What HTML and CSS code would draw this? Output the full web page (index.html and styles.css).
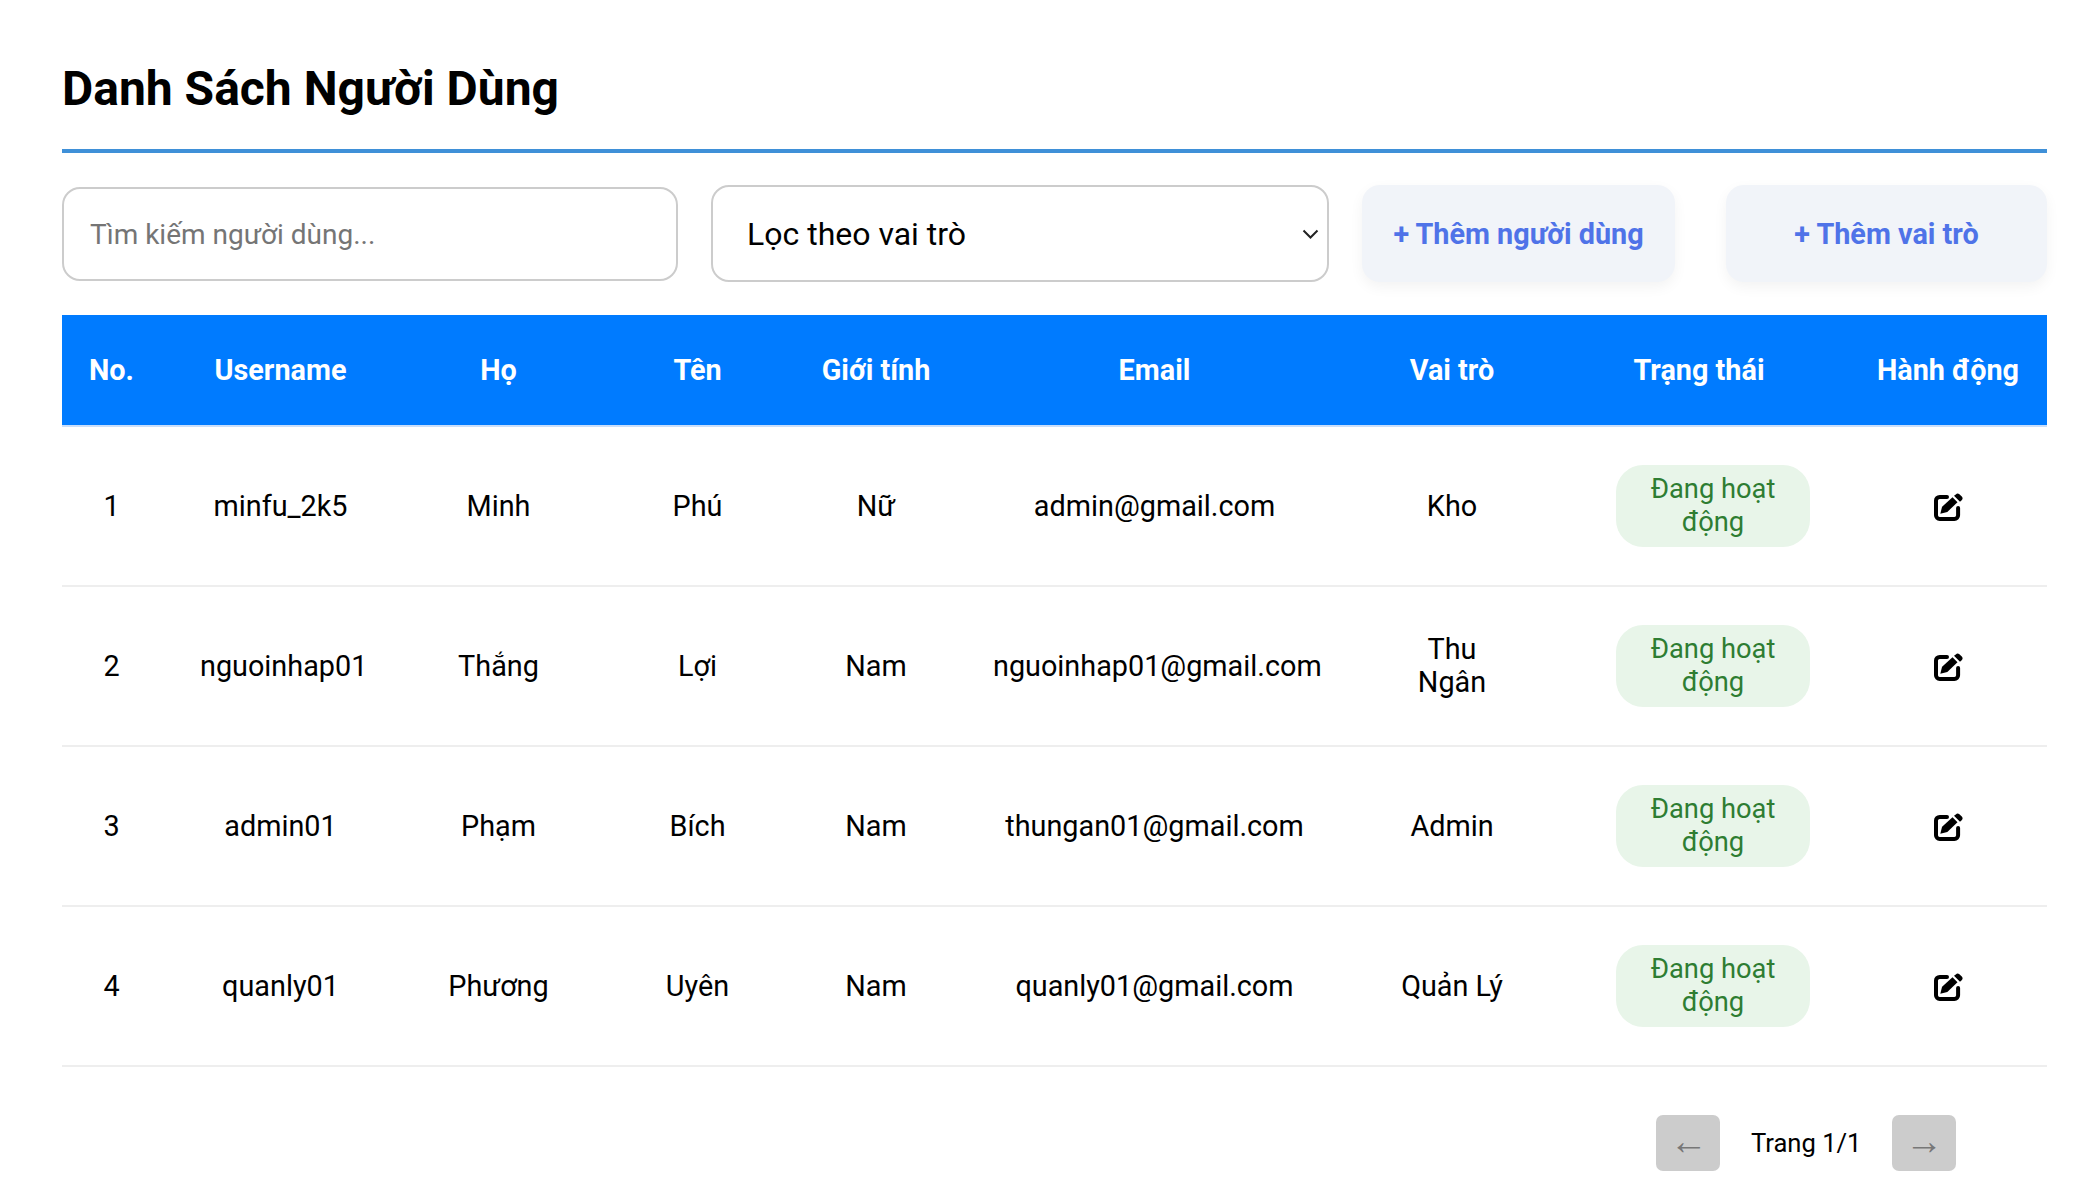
FILE: index.html
```html
<!DOCTYPE html>
<html lang="vi">
<head>
  <meta charset="UTF-8">
  <meta name="viewport" content="width=device-width, initial-scale=1.0">
  <title>Danh Sách Người Dùng</title>
  <link rel="stylesheet" href="styles.css">
</head>
<body>
  <svg class="icon-defs" aria-hidden="true">
    <symbol id="icon-edit" viewBox="0 0 29 29">
      <path class="edit-box" d="M13 4.9H5.7a3.7 3.7 0 0 0-3.7 3.7v14.7a3.7 3.7 0 0 0 3.7 3.7h14.7a3.7 3.7 0 0 0 3.7-3.7V16"/>
      <path d="M6.3 21.7l1.8-7 10.4-9.4 5 5-10.2 9.6z"/>
      <path d="M21.8 2.4a2.6 2.6 0 0 1 3.6-.2l2.4 2.4a2.6 2.6 0 0 1-.1 3.6l-1.7 1.6-6-6z"/>
    </symbol>
  </svg>

  <div class="container">
    <h1>Danh Sách Người Dùng</h1>

    <div class="toolbar">
      <input type="text" class="search" placeholder="Tìm kiếm người dùng...">
      <select class="role-filter">
        <option>Lọc theo vai trò</option>
        <option>Admin</option>
        <option>Kho</option>
        <option>Thu Ngân</option>
        <option>Quản Lý</option>
      </select>
      <button class="btn-add btn-user">+ Thêm người dùng</button>
      <button class="btn-add btn-role">+ Thêm vai trò</button>
    </div>

    <table class="user-table">
      <colgroup>
        <col class="col-no">
        <col class="col-username">
        <col class="col-last">
        <col class="col-first">
        <col class="col-gender">
        <col class="col-email">
        <col class="col-role">
        <col class="col-status">
        <col class="col-action">
      </colgroup>
      <thead>
        <tr>
          <th>No.</th>
          <th>Username</th>
          <th>Họ</th>
          <th>Tên</th>
          <th>Giới tính</th>
          <th>Email</th>
          <th>Vai trò</th>
          <th>Trạng thái</th>
          <th>Hành động</th>
        </tr>
      </thead>
      <tbody>
        <tr>
          <td>1</td>
          <td>minfu_2k5</td>
          <td>Minh</td>
          <td>Phú</td>
          <td>Nữ</td>
          <td>admin@gmail.com</td>
          <td>Kho</td>
          <td><span class="badge">Đang hoạt động</span></td>
          <td><svg class="icon-edit"><use href="#icon-edit"></use></svg></td>
        </tr>
        <tr>
          <td>2</td>
          <td>nguoinhap01</td>
          <td>Thắng</td>
          <td>Lợi</td>
          <td>Nam</td>
          <td>nguoinhap01@gmail.com</td>
          <td>Thu Ngân</td>
          <td><span class="badge">Đang hoạt động</span></td>
          <td><svg class="icon-edit"><use href="#icon-edit"></use></svg></td>
        </tr>
        <tr>
          <td>3</td>
          <td>admin01</td>
          <td>Phạm</td>
          <td>Bích</td>
          <td>Nam</td>
          <td>thungan01@gmail.com</td>
          <td>Admin</td>
          <td><span class="badge">Đang hoạt động</span></td>
          <td><svg class="icon-edit"><use href="#icon-edit"></use></svg></td>
        </tr>
        <tr>
          <td>4</td>
          <td>quanly01</td>
          <td>Phương</td>
          <td>Uyên</td>
          <td>Nam</td>
          <td>quanly01@gmail.com</td>
          <td>Quản Lý</td>
          <td><span class="badge">Đang hoạt động</span></td>
          <td><svg class="icon-edit"><use href="#icon-edit"></use></svg></td>
        </tr>
      </tbody>
    </table>

    <div class="pagination">
      <button class="page-btn" disabled>←</button>
      <span class="page-label">Trang 1/1</span>
      <button class="page-btn" disabled>→</button>
    </div>
  </div>
</body>
</html>
```

FILE: styles.css
```css
body {
  margin: 0;
  font-family: Roboto, "Noto Sans", sans-serif;
  font-size: 28.8px;
  color: #000;
  background: #fff;
}
.icon-defs {
  display: none;
}
.container {
  padding: 0 51px 0 62px;
}
h1 {
  margin: 0;
  padding: 60px 0 31px;
  font-size: 48px;
  line-height: 58px;
  font-weight: 700;
  border-bottom: 4px solid #3f90d8;
}
.toolbar {
  display: flex;
  align-items: center;
  gap: 33px;
  margin: 32px 0 33px;
}
.search,
.role-filter {
  box-sizing: border-box;
  border: 2px solid #ccc;
  border-radius: 18px;
  background: #fff;
  font-family: inherit;
}
.search {
  width: 616px;
  height: 94px;
  padding: 2px 26px 0;
  font-size: 28px;
}
.search::placeholder {
  color: #757575;
}
.role-filter {
  width: 618px;
  height: 97px;
  padding: 0 34px;
  font-size: 32px;
  color: #000;
  appearance: none;
  background-image: url("data:image/svg+xml,%3Csvg xmlns='http://www.w3.org/2000/svg' width='17' height='10'%3E%3Cpath d='M1.5 1.5l7 7 7-7' fill='none' stroke='%23222' stroke-width='2'/%3E%3C/svg%3E");
  background-repeat: no-repeat;
  background-position: right 8px center;
}
.btn-add {
  height: 97px;
  border: none;
  border-radius: 18px;
  background: #f1f4f9;
  color: #4f73e8;
  font-family: inherit;
  font-size: 28.8px;
  font-weight: 700;
  box-shadow: 0 5px 14px rgba(0, 0, 0, 0.05);
  cursor: pointer;
}
.btn-user {
  width: 313px;
}
.btn-role {
  width: 321px;
  margin-left: 18px;
}
.user-table {
  width: 100%;
  table-layout: fixed;
  border-collapse: separate;
  border-spacing: 0;
}
.col-no { width: 99px; }
.col-username { width: 239px; }
.col-last { width: 197px; }
.col-first { width: 201px; }
.col-gender { width: 156px; }
.col-email { width: 401px; }
.col-role { width: 194px; }
.col-status { width: 300px; }
.col-action { width: 198px; }
th {
  height: 110px;
  padding: 0 20px;
  background: #007bff;
  color: #fff;
  font-weight: 700;
  text-align: center;
  white-space: nowrap;
  border-bottom: 2px solid #c9defa;
}
td {
  padding: 38px 39px;
  line-height: 33px;
  text-align: center;
  border-bottom: 2px solid #eee;
}
.badge {
  display: inline-block;
  box-sizing: border-box;
  width: 194px;
  padding: 8px 30px;
  margin-left: 28px;
  border-radius: 27px;
  background: #e8f5e9;
  color: #2e7d32;
  font-size: 27.3px;
  vertical-align: middle;
}
.icon-edit {
  display: block;
  width: 29px;
  height: 29px;
  margin: 0 auto;
}
.edit-box {
  fill: none;
  stroke: #000;
  stroke-width: 4;
  stroke-linecap: round;
}
.pagination {
  display: flex;
  justify-content: flex-end;
  align-items: center;
  gap: 30.5px;
  margin: 48px 91px 0 0;
}
.page-label {
  font-size: 25.6px;
}
.page-btn {
  width: 64px;
  height: 56px;
  padding: 0 0 4px;
  border: none;
  border-radius: 7px;
  background: #ccc;
  color: #777;
  font-family: "Liberation Sans", sans-serif;
  font-size: 38px;
}
```
